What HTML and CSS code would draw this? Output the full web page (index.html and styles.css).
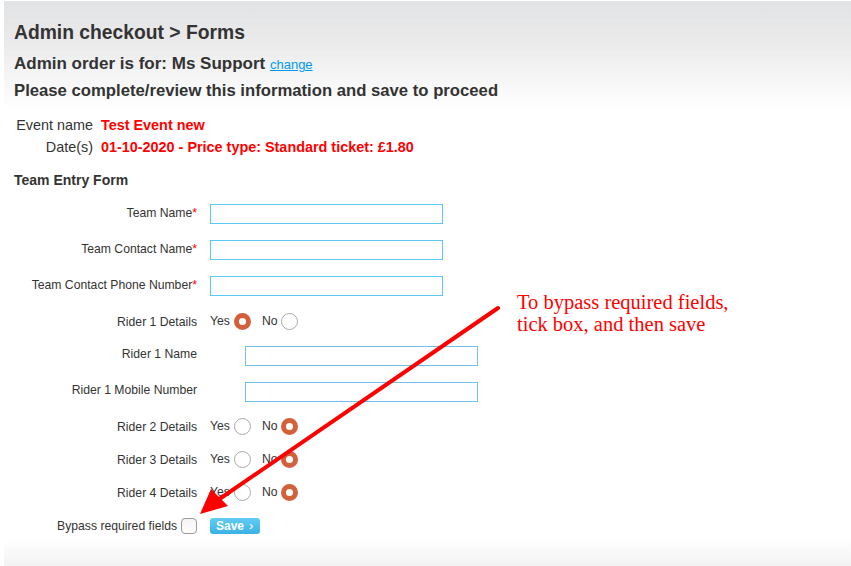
FILE: index.html
```html
<!DOCTYPE html>
<html>
<head>
<meta charset="utf-8">
<link rel="stylesheet" href="styles.css">
</head>
<body>
<div class="page">
  <div class="head">
    <h1 class="title">Admin checkout &gt; Forms</h1>
    <h2 class="sub">Admin order is for: Ms Support <a class="change" href="#">change</a></h2>
    <h2 class="sub sub2">Please complete/review this information and save to proceed</h2>
  </div>
  <div class="event">
    <div class="elabel">Event name</div><div class="evalue">Test Event new</div>
    <div class="elabel">Date(s)</div><div class="evalue">01-10-2020 - Price type: Standard ticket: £1.80</div>
  </div>
  <h3 class="formtitle">Team Entry Form</h3>
  <div class="form">
    <div class="row"><div class="lbl">Team Name<span class="req">*</span></div><div class="field"><span class="input"></span></div></div>
    <div class="row"><div class="lbl">Team Contact Name<span class="req">*</span></div><div class="field"><span class="input"></span></div></div>
    <div class="row"><div class="lbl">Team Contact Phone Number<span class="req">*</span></div><div class="field"><span class="input"></span></div></div>
    <div class="row rrow"><div class="lbl">Rider 1 Details</div><div class="field"><span class="opt">Yes</span><span class="radio on"></span><span class="opt no">No</span><span class="radio"></span></div></div>
    <div class="row sub-row"><div class="lbl">Rider 1 Name</div><div class="field indent"><span class="input"></span></div></div>
    <div class="row sub-row"><div class="lbl">Rider 1 Mobile Number</div><div class="field indent"><span class="input"></span></div></div>
    <div class="row rrow"><div class="lbl">Rider 2 Details</div><div class="field"><span class="opt">Yes</span><span class="radio"></span><span class="opt no">No</span><span class="radio on"></span></div></div>
    <div class="row rrow"><div class="lbl">Rider 3 Details</div><div class="field"><span class="opt">Yes</span><span class="radio"></span><span class="opt no">No</span><span class="radio on"></span></div></div>
    <div class="row rrow"><div class="lbl">Rider 4 Details</div><div class="field"><span class="opt">Yes</span><span class="radio"></span><span class="opt no">No</span><span class="radio on"></span></div></div>
    <div class="row rrow bypass"><div class="lbl">Bypass required fields <span class="check"></span></div><div class="field"><span class="save">Save <span class="chev">›</span></span></div></div>
  </div>
  <div class="foot"></div>
  <div class="note">To bypass required fields,<br>tick box, and then save</div>
  <svg class="arrow" width="851" height="566" viewBox="0 0 851 566">
    <line x1="498" y1="308" x2="218" y2="500" stroke="#ff0000" stroke-width="4" stroke-linecap="round"/>
    <polygon points="200,514 211,489 228,506" fill="#ff0000"/>
  </svg>
</div>
</body>
</html>
```
FILE: styles.css
```css
html, body { margin: 0; padding: 0; background: #fff; }
body { font-family: "Liberation Sans", Arial, sans-serif; color: #333; }
.page { position: relative; width: 851px; height: 566px; overflow: hidden; }
.head {
  box-sizing: border-box;
  margin: 1px 0 0 4px;
  padding: 19px 0 0 10px;
  background: linear-gradient(#e2e3e4 0%, #ebebec 40%, #f6f7f6 75%, #ffffff 100%);
  height: 109px;
}
.title { margin: 0; font-size: 19.3px; font-weight: bold; line-height: 26px; color: #333; }
.sub { margin: 7px 0 0; font-size: 17px; font-weight: bold; line-height: 22px; color: #333; }
.sub2 { margin-top: 4px; font-size: 16.7px; }
.change { font-size: 13px; font-weight: normal; color: #0099ee; text-decoration: underline; }
.event {
  display: grid;
  grid-template-columns: 89px auto;
  column-gap: 8px;
  row-gap: 4px;
  margin: 6px 0 0 4px;
  font-size: 14.4px;
  line-height: 18px;
}
.elabel { text-align: right; color: #333; }
.evalue { color: #ff0000; font-weight: bold; }
.formtitle { margin: 15px 0 0 14px; font-size: 14px; line-height: 18px; font-weight: bold; color: #333; }
.form { margin-top: 7px; display: flex; flex-direction: column; }
.row { display: flex; align-items: center; height: 36px; font-size: 12.2px; }
.row .lbl { width: 197px; text-align: right; margin-top: -2px; }
.req { color: #ff0000; }
.field { margin-left: 13px; display: flex; align-items: center; }
.field.indent { margin-left: 48px; margin-top: 2px; }
.input { display: block; width: 231px; height: 18px; border: 1px solid #5ac8f5; background: #fff; }
.sub-row .input { border-color: #72c0e6; }
.rrow { height: 33px; }
.rrow .lbl { margin-top: 2px; }
.rrow .field { margin-top: 2px; }
.opt { font-size: 12.2px; margin-top: -1px; }
.opt.no { margin-left: 11px; }
.radio {
  display: inline-block; box-sizing: border-box; width: 17px; height: 17px; border-radius: 50%;
  border: 1px solid #aaa; background: #fff; margin-left: 4px;
}
.radio.on { border: 5px solid #d2603a; background: #fff; }
.bypass .lbl { display: flex; justify-content: flex-end; align-items: center; }
.check {
  display: inline-block; box-sizing: border-box; width: 16px; height: 16px; border-radius: 4px;
  border: 1px solid #9a9a9a; background: linear-gradient(#f4f4f4, #fff); margin-left: 4px; margin-top: 1px;
}
.save {
  display: inline-flex; align-items: center; height: 16px; padding: 0 7px 0 6px; border-radius: 3px;
  background: linear-gradient(#62ccf3, #3bb2e4); color: #fff; font-weight: bold; font-size: 12px;
  line-height: 16px; margin-top: 1px;
}
.chev { margin-left: 5px; font-size: 13px; font-weight: normal; }
.foot {
  margin: -2px 0 0 4px; height: 32px;
  background: linear-gradient(#ffffff, #f0f0f0);
}
.note {
  position: absolute; left: 517px; top: 291px;
  font-family: "Liberation Serif", "Times New Roman", serif;
  font-size: 20.5px; line-height: 22px; color: #ff0000;
}
.arrow { position: absolute; left: 0; top: 0; pointer-events: none; }
```
